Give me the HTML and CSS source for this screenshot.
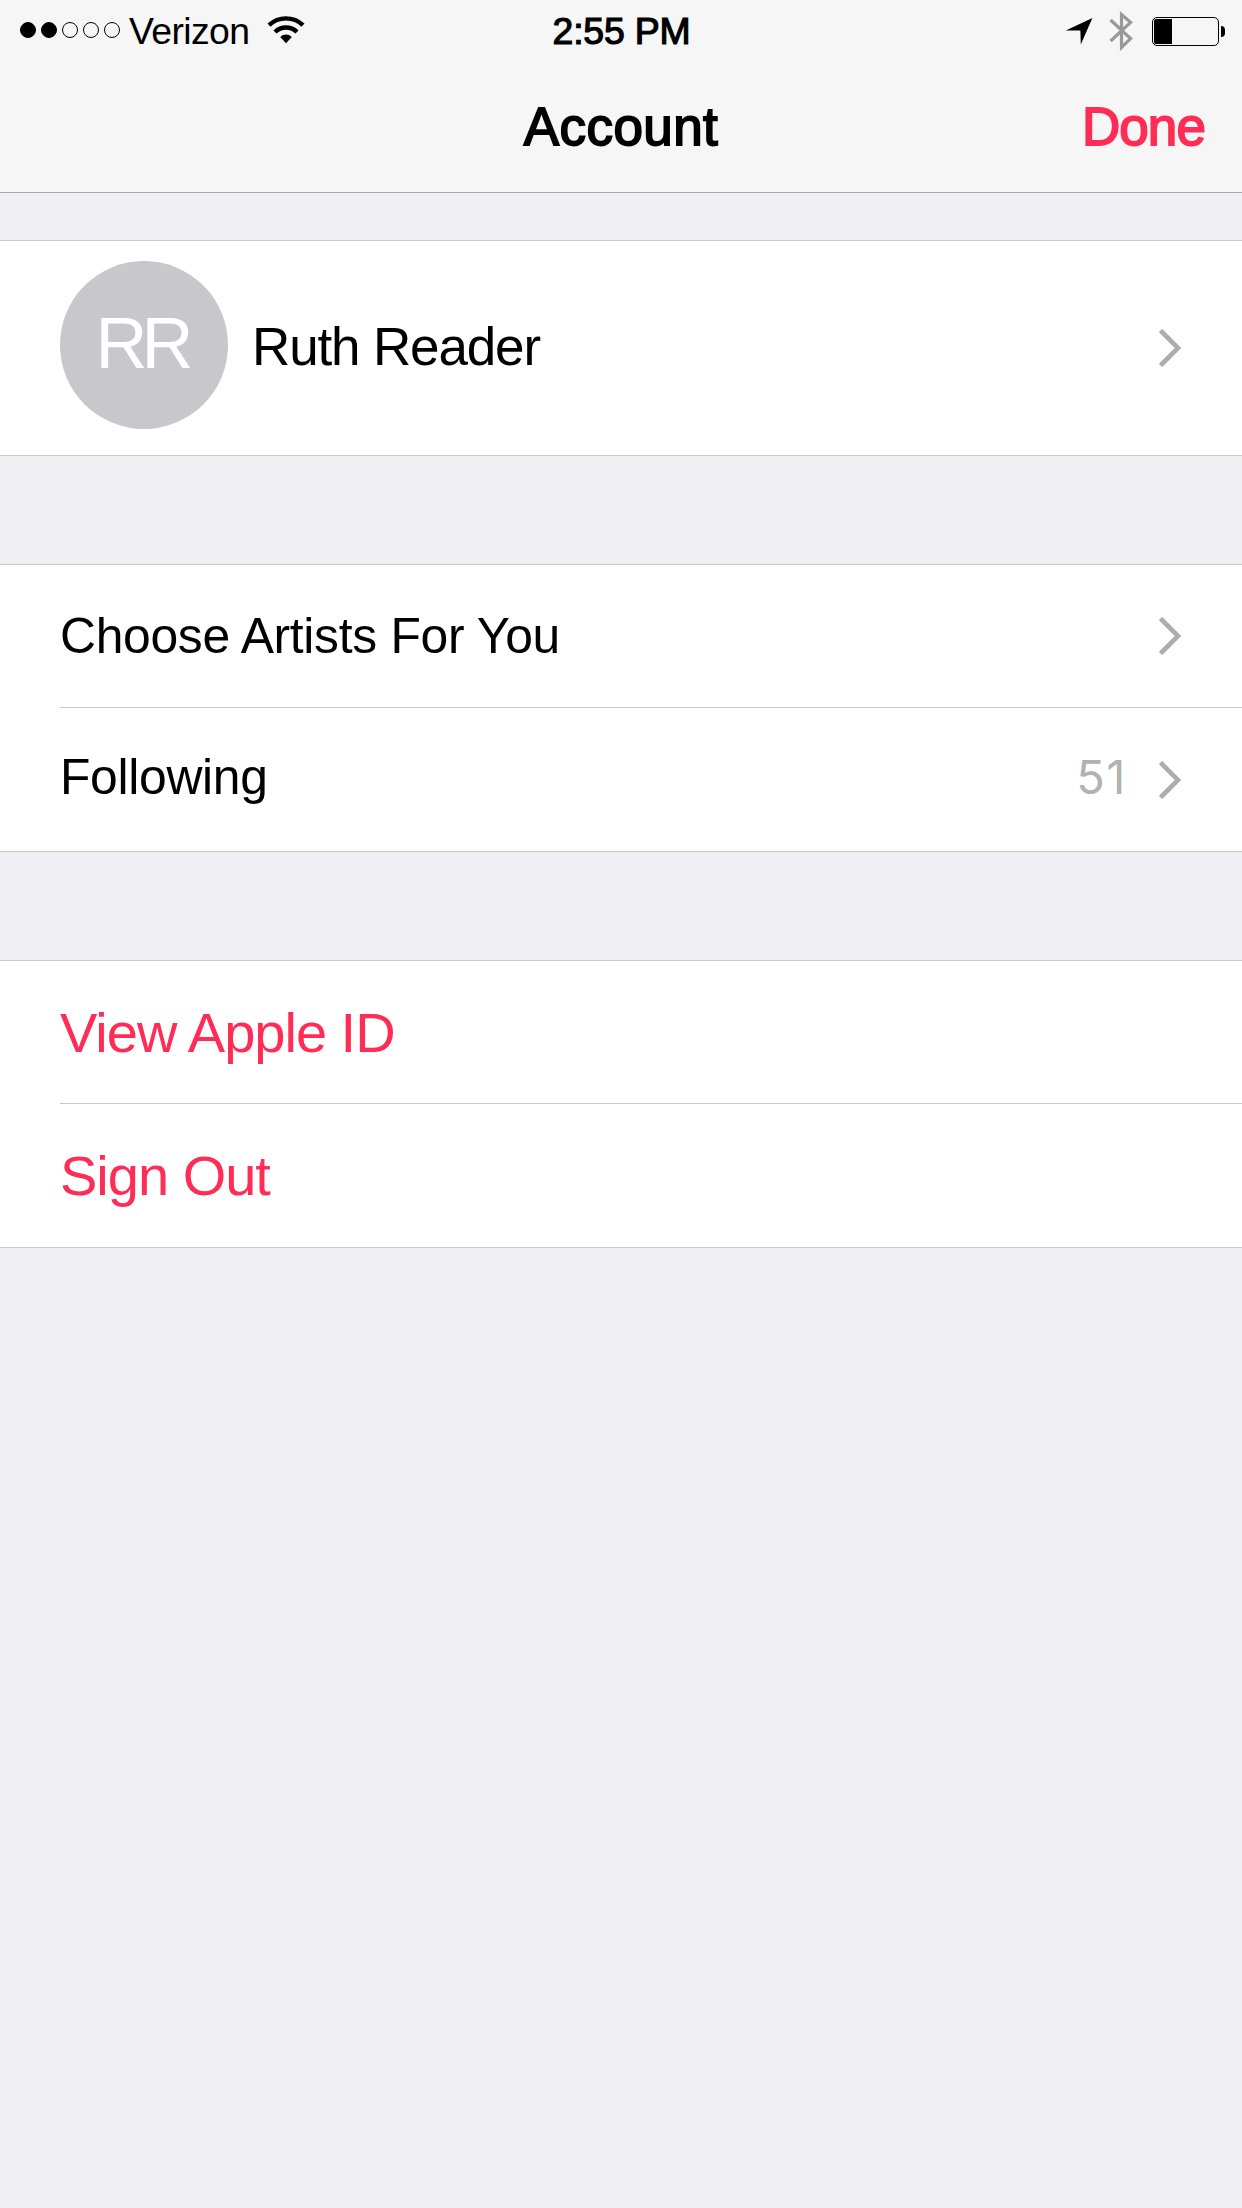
FILE: index.html
```html
<!DOCTYPE html>
<html lang="en">
<head>
    <meta charset="UTF-8">
    <meta name="viewport" content="width=device-width, initial-scale=1.0">
    <title>Account</title>
    <link rel="stylesheet" href="styles.css">
</head>
<body>

    <!-- Status bar and navigation -->
    <header class="header">
        <div class="status-bar">
            <div class="status-left">
                <div class="signal">
                    <span class="dot full"></span>
                    <span class="dot full"></span>
                    <span class="dot"></span>
                    <span class="dot"></span>
                    <span class="dot"></span>
                </div>
                <span class="carrier">Verizon</span>
                <svg class="wifi" width="38" height="28" viewBox="0 0 38 28">
                    <g fill="none" stroke="#000" stroke-width="4.4">
                        <path d="M2 9.2a24.5 24.5 0 0 1 34 0"/>
                        <path d="M8 16a15.8 15.8 0 0 1 22 0"/>
                    </g>
                    <path d="M19 27.2l-5.8-6.2a8.2 8.2 0 0 1 11.6 0z"/>
                </svg>
            </div>
            <span class="time">2:55 PM</span>
            <div class="status-right">
                <svg class="location" width="28" height="28" viewBox="0 0 28 28">
                    <path d="M.8 13.4L27.4 1 15.8 27.6l-.4-14.2z"/>
                </svg>
                <svg class="bluetooth" width="24" height="42" viewBox="0 0 24 42">
                    <path d="M1.6 10l20 18.6-9.1 8.8V4.6l9.1 7.8-20 18.6" fill="none" stroke="#999" stroke-width="3.2"/>
                </svg>
                <div class="battery">
                    <div class="battery-body"><div class="battery-level"></div></div>
                    <div class="battery-tip"></div>
                </div>
            </div>
        </div>
        <nav class="nav-bar">
            <h1 class="title">Account</h1>
            <a class="done">Done</a>
        </nav>
    </header>

    <main>
        <!-- Profile -->
        <section class="group profile">
            <div class="row">
                <div class="avatar">RR</div>
                <span class="name">Ruth Reader</span>
                <svg class="chevron" width="24" height="40" viewBox="0 0 24 40"><path d="M2.5 2.5L20 20 2.5 37.5"/></svg>
            </div>
        </section>

        <section class="group">
            <div class="row">
                <span class="label choose">Choose Artists For You</span>
                <svg class="chevron" width="24" height="40" viewBox="0 0 24 40"><path d="M2.5 2.5L20 20 2.5 37.5"/></svg>
            </div>
            <div class="row">
                <span class="label following">Following</span>
                <span class="count">51</span>
                <svg class="chevron" width="24" height="40" viewBox="0 0 24 40"><path d="M2.5 2.5L20 20 2.5 37.5"/></svg>
            </div>
        </section>

        <section class="group">
            <div class="row"><a class="action">View Apple ID</a></div>
            <div class="row"><a class="action">Sign Out</a></div>
        </section>
    </main>

</body>
</html>
```
FILE: styles.css
```css
* {
    box-sizing: border-box;
}

body {
    font-family: "Liberation Sans", Arial, sans-serif;
    margin: 0;
    min-height: 2208px;
    background-color: #efeff4;
    color: #000;
}

svg {
    display: block;
    flex: none;
}

/* Header */
.header {
    height: 193px;
    background-color: #f6f6f6;
    border-bottom: 1px solid #a7a7ab;
}

.status-bar {
    display: grid;
    grid-template-columns: 1fr auto 1fr;
    align-items: center;
    height: 62px;
    padding: 0 17px 0 20px;
    font-size: 37.4px;
    line-height: 62px;
}

.status-left,
.status-right,
.signal,
.battery {
    display: flex;
    align-items: center;
}

.status-right {
    justify-content: flex-end;
}

.signal {
    gap: 5px;
    padding-bottom: 2px;
}

.dot {
    width: 16px;
    height: 16px;
    border: 1px solid #000;
    border-radius: 50%;
}

.dot.full {
    background-color: #000;
}

.carrier {
    margin-left: 9px;
    letter-spacing: -0.6px;
}

.wifi {
    margin: 0 0 3px 17px;
}

/* Medium weight, between regular and bold */
.time {
    margin-right: 2px;
    letter-spacing: -0.2px;
    -webkit-text-stroke: 1.2px #000;
}

.location {
    margin-right: 16px;
}

.bluetooth {
    margin-right: 19px;
}

.battery {
    gap: 2px;
}

.battery-body {
    width: 67px;
    height: 29px;
    padding: 1px;
    border: 1px solid #000;
    border-radius: 5px;
}

.battery-level {
    width: 18px;
    height: 25px;
    background-color: #000;
    border-radius: 2px 0 0 2px;
}

.battery-tip {
    width: 4px;
    height: 11px;
    background-color: #000;
    border-radius: 0 5px 5px 0;
}

.nav-bar {
    display: grid;
    grid-template-columns: 1fr auto 1fr;
    align-items: center;
    height: 130px;
    padding: 0 37px 1px;
    font-size: 53px;
}

.title {
    grid-column: 2;
    margin: 0;
    font-size: 53px;
    font-weight: normal;
    letter-spacing: 0.4px;
    -webkit-text-stroke: 1.8px #000;
}

.done {
    justify-self: end;
    color: #ff2d55;
    letter-spacing: -0.9px;
    -webkit-text-stroke: 1.8px #ff2d55;
}

/* Grouped lists */
.group {
    margin-bottom: 108px;
    padding-left: 60px;
    background-color: #fff;
    border-top: 1px solid #c8c7cc;
    border-bottom: 1px solid #c8c7cc;
}

.profile {
    margin-top: 47px;
}

.row {
    display: flex;
    align-items: center;
    height: 143px;
    padding-right: 60px;
}

.row + .row {
    border-top: 1px solid #c8c7cc;
}

.row:first-child {
    height: 142px;
}

.row:last-child {
    height: 144px;
}

.profile .row {
    height: 214px;
}

.avatar {
    width: 168px;
    height: 168px;
    margin: 0 24px 6px 0;
    border-radius: 50%;
    background-color: #c7c7cc;
    color: #fff;
    font-size: 72px;
    line-height: 164px;
    letter-spacing: -6px;
    text-indent: -5px;
    text-align: center;
}

.name {
    font-size: 53px;
    letter-spacing: -1.14px;
    padding-bottom: 3px;
}

.label {
    font-size: 49.8px;
}

.choose {
    letter-spacing: -0.3px;
}

.following {
    letter-spacing: -0.3px;
    padding-bottom: 6px;
}

.chevron {
    margin-left: auto;
    fill: none;
    stroke: #adadad;
    stroke-width: 4.6;
}

.count {
    margin-left: auto;
    padding-bottom: 7px;
    font-family: Inter, sans-serif;
    font-size: 47px;
    letter-spacing: 1.5px;
    color: #b2b2b2;
}

.count + .chevron {
    margin-left: 31px;
}

.action {
    color: #ff2d55;
    font-size: 56px;
    letter-spacing: -1px;
}
```
